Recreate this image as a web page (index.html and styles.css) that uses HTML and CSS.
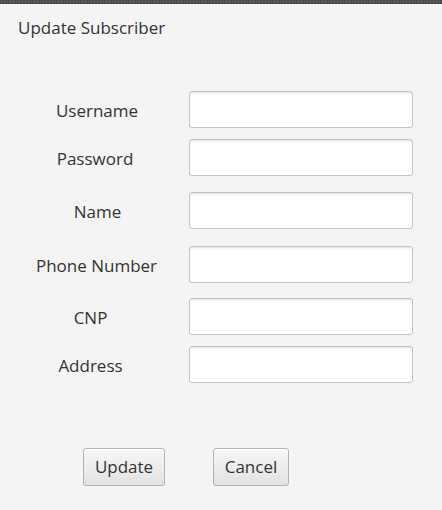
FILE: index.html
```html
<!DOCTYPE html>
<html>
<head>
<meta charset="utf-8">
<link rel="stylesheet" href="styles.css">
</head>
<body>
<div class="strip"></div>
<div class="title">Update Subscriber</div>
<div class="form">
  <div class="row r1"><label class="lbl l-user">Username</label><input class="field" type="text"></div>
  <div class="row r2"><label class="lbl l-pass">Password</label><input class="field" type="text"></div>
  <div class="row r3"><label class="lbl l-name">Name</label><input class="field" type="text"></div>
  <div class="row r4"><label class="lbl l-phone">Phone Number</label><input class="field" type="text"></div>
  <div class="row r5"><label class="lbl l-cnp">CNP</label><input class="field" type="text"></div>
  <div class="row r6"><label class="lbl l-addr">Address</label><input class="field" type="text"></div>
</div>
<div class="actions">
  <button class="btn btn-update">Update</button>
  <button class="btn btn-cancel">Cancel</button>
</div>
</body>
</html>
```
FILE: styles.css
```css
html, body {
  margin: 0;
  padding: 0;
  background: #f4f4f4;
  width: 442px;
  height: 510px;
  overflow: hidden;
  font-family: "Open Sans", "Noto Sans", sans-serif;
  font-size: 17px;
  color: #333333;
}
.strip {
  height: 4px;
  background-color: #474747;
  background-image: radial-gradient(circle, #6a6a6a 0.8px, transparent 1.2px);
  background-size: 3px 3px;
}
.title {
  margin-top: 12px;
  padding-left: 18px;
  line-height: 23px;
}
.form {
  display: flex;
  flex-direction: column;
  margin-top: 52px;
}
.row {
  display: flex;
  align-items: center;
  height: 37px;
}
.r2 { margin-top: 11px; }
.r3 { margin-top: 16px; }
.r4 { margin-top: 17px; }
.r5 { margin-top: 15px; }
.r6 { margin-top: 11px; }
.lbl {
  width: 154px;
  margin-left: 18px;
  margin-right: 17px;
  padding-top: 1px;
  text-align: center;
  box-sizing: border-box;
}
.l-user { padding-left: 4px; }
.l-pass { padding-left: 0; }
.l-name { padding-left: 5px; }
.l-phone { padding-left: 3px; }
.l-cnp { padding-right: 9px; }
.l-addr { padding-right: 9px; }
.field {
  width: 224px;
  height: 37px;
  box-sizing: border-box;
  margin: 0;
  border: 1px solid #c4c4c4;
  border-radius: 3px;
  background: linear-gradient(#f3f3f3, #ffffff 4px);
  box-shadow: inset 0 1px 1px rgba(0,0,0,0.06);
  outline: none;
}
.actions {
  display: flex;
  margin-top: 65px;
  padding-left: 83px;
  gap: 48px;
}
.btn {
  height: 38px;
  box-sizing: border-box;
  padding: 0 10px 1px;
  font-family: "Open Sans", "Noto Sans", sans-serif;
  font-size: 17px;
  color: #333333;
  border: 1px solid #b3b3b3;
  border-radius: 3px;
  background: linear-gradient(#f7f7f7, #e2e2e2);
  box-shadow: inset 0 1px 0 #ffffff;
}
.btn-update { width: 82px; }
.btn-cancel { width: 76px; }
```
